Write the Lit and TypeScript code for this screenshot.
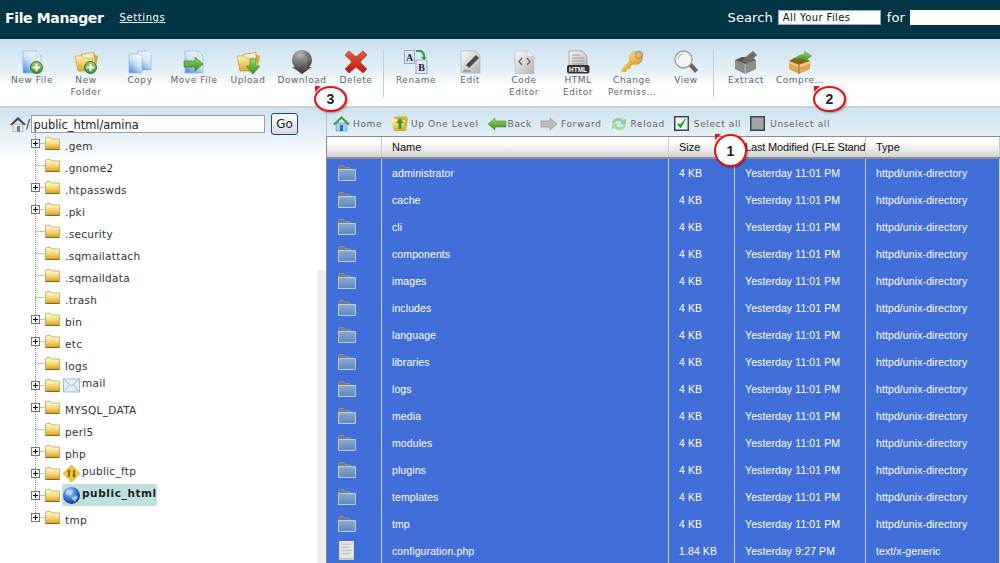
import { LitElement, html, css } from "lit";
import { customElement } from "lit/decorators.js";

const defs = html`<svg class="defs" aria-hidden="true"><defs>
  <linearGradient id="gPage" x1="0.8" y1="0" x2="0.2" y2="1"><stop offset="0" stop-color="#f4f9fe"/><stop offset="0.5" stop-color="#cfe2f6"/><stop offset="1" stop-color="#4f93dc"/></linearGradient>
  <linearGradient id="gGreen" x1="0" y1="0" x2="0" y2="1"><stop offset="0" stop-color="#9fd86a"/><stop offset="1" stop-color="#2f8f1c"/></linearGradient>
  <linearGradient id="gFolder" x1="0" y1="0" x2="0" y2="1"><stop offset="0" stop-color="#fff4b0"/><stop offset="1" stop-color="#e0a428"/></linearGradient>
  <linearGradient id="gTree" x1="0" y1="0" x2="0" y2="1"><stop offset="0" stop-color="#fff8d4"/><stop offset="0.55" stop-color="#f7d774"/><stop offset="1" stop-color="#d99a1e"/></linearGradient>
  <linearGradient id="gGray" x1="0" y1="0" x2="1" y2="1"><stop offset="0" stop-color="#fafafa"/><stop offset="1" stop-color="#b4b4b4"/></linearGradient>
  <linearGradient id="gDark" x1="0" y1="0" x2="0" y2="1"><stop offset="0" stop-color="#8c8c8c"/><stop offset="1" stop-color="#333"/></linearGradient>
  <linearGradient id="gRed" x1="0" y1="0" x2="0" y2="1"><stop offset="0" stop-color="#f0583a"/><stop offset="1" stop-color="#b81808"/></linearGradient>
  <linearGradient id="gKey" x1="0" y1="0" x2="1" y2="1"><stop offset="0" stop-color="#ffe07a"/><stop offset="1" stop-color="#d88a18"/></linearGradient>
  <linearGradient id="gBlueF" x1="0" y1="0" x2="0" y2="1"><stop offset="0" stop-color="#88a9d2"/><stop offset="1" stop-color="#5f88bd"/></linearGradient>
  <radialGradient id="gGlobe" cx="0.4" cy="0.3" r="0.8"><stop offset="0" stop-color="#cfe6ff"/><stop offset="0.5" stop-color="#2f6fd0"/><stop offset="1" stop-color="#0c2a78"/></radialGradient>
  <radialGradient id="gBall" cx="0.4" cy="0.25" r="0.8"><stop offset="0" stop-color="#b8b8b8"/><stop offset="1" stop-color="#3a3a3a"/></radialGradient>
</defs></svg>`;

const I = (body: unknown, w = 24, h = 24) =>
  html`<svg class="ic" width=${w} height=${h} viewBox="0 0 24 24">${body}</svg>`;

const plusBadge = html`<svg x="10" y="11" width="13" height="13" viewBox="0 0 13 13"><circle cx="6.5" cy="6.5" r="6" fill="url(#gGreen)" stroke="#2a7a24"/><path d="M6.5 2.8v7.4M2.8 6.5h7.4" stroke="#fff" stroke-width="2.2"/></svg>`;
const pagePath = html`<svg width="24" height="24" viewBox="0 0 24 24"><path d="M3 1h13l5 5v17H3z" fill="url(#gPage)" stroke="#8fb6dd" stroke-width=".7"/><path d="M16 1v5h5z" fill="#fff" stroke="#8fb6dd" stroke-width=".6"/></svg>`;
const folderBig = html`<svg width="24" height="24" viewBox="0 0 24 24"><path d="M7 4l13-2 1 3 3 1-3 15H5z" fill="#d9a93a"/><path d="M8 5l11-2 2 13-11 2z" fill="#fff" opacity=".85"/><path d="M1 6h7l2 2h9l-1 13H4z" fill="url(#gFolder)" stroke="#b98a22" stroke-width=".6"/></svg>`;

const icons: Record<string, unknown> = {
  newfile: I(html`<svg>${pagePath}${plusBadge}</svg>`),
  newfolder: I(html`<svg>${folderBig}${plusBadge}</svg>`),
  copy: I(html`<svg width="24" height="24" viewBox="0 0 24 24"><path d="M10 1h9l4 4v15H10z" fill="url(#gPage)" stroke="#8fb6dd" stroke-width=".7"/><path d="M19 1v4h4z" fill="#fff"/><path d="M1 4h9l4 4v15H1z" fill="url(#gPage)" stroke="#8fb6dd" stroke-width=".7"/><path d="M10 4v4h4z" fill="#fff"/></svg>`),
  move: I(html`<svg>${pagePath}<svg width="24" height="24" viewBox="0 0 24 24"><path d="M2 11h11V7l8 7-8 7v-4H2z" fill="url(#gGreen)" stroke="#2a7a24" stroke-width=".6"/></svg></svg>`),
  upload: I(html`<svg>${folderBig}<svg width="24" height="24" viewBox="0 0 24 24"><path d="M14 9h6v7h4l-7 8-7-8h4z" fill="url(#gGreen)" stroke="#2a7a24" stroke-width=".5"/></svg></svg>`),
  download: I(html`<svg width="24" height="24" viewBox="0 0 24 24"><circle cx="12" cy="10" r="10" fill="url(#gBall)"/><path d="M3 9h18" stroke="#8a8a8a" stroke-width=".7"/><path d="M7 9h10v8h5L12 24 2 17h5z" fill="url(#gDark)"/></svg>`),
  del: I(html`<svg width="24" height="24" viewBox="0 0 24 24"><path d="M1 5l4-4 7 6 7-6 4 4-7 7 7 7-4 4-7-6-7 6-4-4 7-7z" fill="url(#gRed)" stroke="#a01808" stroke-width=".5"/></svg>`),
  rename: I(html`<svg width="24" height="24" viewBox="0 0 24 24"><rect x="0.5" y="0.5" width="10" height="13" fill="#dfe8f5" stroke="#9ab"/><text x="5.5" y="11" class="svgt" text-anchor="middle">A</text><rect x="12" y="10" width="11" height="13.500" fill="#dfe8f5" stroke="#9ab"/><text x="17.500" y="21" class="svgt" text-anchor="middle">B</text><path d="M12 1c5-1 8 1 8 5v3" fill="none" stroke="#2f9a3c" stroke-width="2"/><path d="M17 7h6l-3 3z" fill="#2f9a3c"/></svg>`),
  edit: I(html`<svg width="24" height="24" viewBox="0 0 24 24"><path d="M3 1h14l5 5v17H3z" fill="url(#gGray)" stroke="#aaa" stroke-width=".6"/><path d="M6 20l2-5L18 5l3 3-10 10z" fill="#4a4a4a"/><path d="M6 20l2-5 3 3z" fill="#ddd"/><path d="M5 21h8" stroke="#777"/></svg>`),
  code: I(html`<svg width="24" height="24" viewBox="0 0 24 24"><path d="M3 1h13l6 5v18H3z" fill="url(#gGray)" stroke="#bbb" stroke-width=".6"/><path d="M16 1v5h6z" fill="#e8e8e8"/><path d="M10 8l-3 3.500 3 3.500M15 8l3 3.500-3 3.500" fill="none" stroke="#666" stroke-width="1.300"/></svg>`),
  htmle: I(html`<svg width="24" height="24" viewBox="0 0 24 24"><path d="M3 1h13l5 5v11H3z" fill="url(#gGray)" stroke="#888" stroke-width=".6"/><path d="M6 5h8M6 8h12M6 11h12M6 14h12" stroke="#999"/><rect x="1" y="15" width="22.500" height="8.500" rx="2" fill="#333"/><text x="12" y="22" class="svgh" text-anchor="middle">HTML</text></svg>`),
  key: I(html`<svg width="24" height="24" viewBox="0 0 24 24"><path d="M1 20l9-10 4 4-3 2-1 3-3 0-1 3-4 0z" fill="url(#gKey)"/><circle cx="16" cy="8" r="6.500" fill="url(#gKey)" stroke="#c88a20" stroke-width=".5"/><circle cx="19" cy="5" r="3.500" fill="none" stroke="#999" stroke-width="1.300"/></svg>`),
  view: I(html`<svg width="24" height="24" viewBox="0 0 24 24"><path d="M14 15l3-3 7 8-3 3z" fill="#666"/><circle cx="9.500" cy="9.500" r="8.500" fill="#f4f4f4" stroke="#999" stroke-width="1.300"/><path d="M4 9a6 6 0 0 1 5-5" stroke="#ccc" fill="none" stroke-width="1.500"/></svg>`),
  extract: I(html`<svg width="24" height="24" viewBox="0 0 24 24"><path d="M1 10l10 4 11-4v9l-11 5-10-5z" fill="#8c8c8c"/><path d="M1 10l7-3h8l6 3-11 4z" fill="#555"/><path d="M8 10l11-9 4 4-9 9z" fill="#6e6e6e"/><path d="M11 14v10" stroke="#bbb"/></svg>`),
  compress: I(html`<svg width="24" height="24" viewBox="0 0 24 24"><path d="M1 11l10 4 11-4v8l-11 5-10-5z" fill="#e0a850"/><path d="M1 11l7-4h7l7 4-11 4z" fill="#8a6226"/><path d="M1 11l-1 2 10 4 1-2zM22 11l2 2-11 4-2-2z" fill="#f0c888"/><path d="M11 15v9" stroke="#a87830"/><path d="M8 11c0-5 3-7 8-7V0l8 6-8 6V8c-3 0-6 1-8 3z" fill="url(#gGreen)"/></svg>`),
};

const small: Record<string, unknown> = {
  home: html`<svg class="ic" width="17" height="17" viewBox="0 0 17 17"><path d="M3 8h11v8H3z" fill="#a8cdf0" stroke="#5f8fc0" stroke-width=".6"/><path d="M0 9l8.500-8L17 9l-2 1-6.500-6L2 10z" fill="#3ea03a"/><path d="M7 10h3v6H7z" fill="#2f6fb8"/></svg>`,
  up: html`<svg class="ic" width="17" height="17" viewBox="0 0 17 17"><path d="M3 2l12-1 2 3-2 12H3z" fill="#d9b040"/><path d="M0 4h6l1 1h7l-2 11H3z" fill="url(#gFolder)"/><path d="M9 3l4 5h-2.500v6h-3V8H5z" fill="#3a9a2a"/></svg>`,
  back: html`<svg class="ic" width="18" height="14" viewBox="0 0 18 14"><path d="M0 7l7-6v3h11v6H7v3z" fill="url(#gGreen)" stroke="#3a8a1c" stroke-width=".5"/></svg>`,
  forward: html`<svg class="ic" width="16" height="14" viewBox="0 0 16 14"><path d="M16 7l-7-6v3H0v6h9v3z" fill="#bdbdbd" stroke="#8c8c8c" stroke-width=".6"/></svg>`,
  reload: html`<svg class="ic" width="16" height="16" viewBox="0 0 15 15"><path d="M1 6c1-4 7-6 11-2l2-2v6H8l2-2C8 4 4 4 3 7z" fill="#8fd08a"/><path d="M14 9c-1 4-7 6-11 2l-2 2V7h6L5 9c2 2 6 2 7-1z" fill="#a6d8a2"/></svg>`,
  check: html`<svg class="ic" width="15" height="15" viewBox="0 0 15 15"><rect x=".75" y=".75" width="13.500" height="13.500" fill="#f4f8f8" stroke="#34464e" stroke-width="1.500"/><path d="M3.500 8l3 4 5-9-5 5.500z" fill="#1fa52c" stroke="#1fa52c"/></svg>`,
  uncheck: html`<svg class="ic" width="15" height="15" viewBox="0 0 15 15"><rect x=".75" y=".75" width="13.500" height="13.500" fill="#a4a4a4" stroke="#34464e" stroke-width="1.500"/></svg>`,
};

const pathHome = html`<svg class="ic" width="16" height="16" viewBox="0 0 16 16"><path d="M3 8h10v7.500H3z" fill="#e8e8e8" stroke="#999" stroke-width=".6"/><path d="M0 8.500L8 1l8 7.500-2 .8L8 4 2 9.300z" fill="#4a4a4a"/><path d="M7 10h3v5.500H7z" fill="#777"/></svg>`;

const treeFolder = html`<svg class="ic" width="15" height="13" viewBox="0 0 15 13"><path d="M.5 12.500V2l1-1.500h4L7 2h7.500v10.500z" fill="url(#gTree)" stroke="#b8953c" stroke-width=".7"/><path d="M1 3.500h13" stroke="#fff6c8"/><path d="M.5 12.500h14" stroke="#8a6a1a"/></svg>`;

const overlay: Record<string, unknown> = {
  mail: html`<svg class="ic" width="17" height="17" viewBox="0 0 17 17"><rect x=".5" y="2" width="16" height="13" fill="#e4eef8" stroke="#9fbad6"/><path d="M.5 2l8 7 8-7M.5 15l6-7M16.500 15l-6-7" fill="none" stroke="#9fbad6"/></svg>`,
  ftp: html`<svg class="ic" width="17" height="17" viewBox="0 0 17 17"><path d="M8.500 0L17 8.500 8.500 17 0 8.500z" fill="#f0c830" stroke="#c89a20" stroke-width=".6"/><path d="M6 4l2 3H7v5H5V7H4zM11 13l2-3h-1V5h-2v5H9z" fill="#8a6a1a"/></svg>`,
  globe: html`<svg class="ic" width="17" height="17" viewBox="0 0 17 17"><circle cx="8.500" cy="8.500" r="8.500" fill="url(#gGlobe)"/><path d="M3 4c3-2 6-1 7 1l-3 3-4-1zM8 11l5-3 2 2-3 5z" fill="#bfe0ff" opacity=".75"/></svg>`,
};

const treeData: [string, boolean, string?][] = [
  [".gem", true], [".gnome2", false], [".htpasswds", true], [".pki", true],
  [".security", false], [".sqmailattach", false], [".sqmaildata", false], [".trash", false],
  ["bin", true], ["etc", true], ["logs", false], ["mail", true, "mail"],
  ["MYSQL_DATA", true], ["perl5", false], ["php", true], ["public_ftp", true, "ftp"],
  ["public_html", true, "globe"], ["tmp", true],
];

const tools: [string, string, boolean?][] = [
  ["newfile", "New File"], ["newfolder", "New Folder"], ["copy", "Copy"], ["move", "Move File"],
  ["upload", "Upload"], ["download", "Download"], ["del", "Delete", true],
  ["rename", "Rename"], ["edit", "Edit"], ["code", "Code Editor"], ["htmle", "HTML Editor"],
  ["key", "Change Permiss…"], ["view", "View", true], ["extract", "Extract"], ["compress", "Compre…"],
];

const nav: [string, string][] = [
  ["home", "Home"], ["up", "Up One Level"], ["back", "Back"], ["forward", "Forward"],
  ["reload", "Reload"], ["check", "Select all"], ["uncheck", "Unselect all"],
];

const dirs = ["administrator", "cache", "cli", "components", "images", "includes", "language", "libraries", "logs", "media", "modules", "plugins", "templates", "tmp"];

@customElement("app-root")
export class AppRoot extends LitElement {
  static styles = css`
    :host { display: block; position: relative; width: 1000px; height: 563px; overflow: hidden; background: #fff; font-family: "DejaVu Sans", sans-serif; color: #333; }
    .defs { position: absolute; width: 0; height: 0; }
    .ic { display: block; flex: none; overflow: visible; }
    .svgt { font: bold 10px "Liberation Serif", serif; fill: #123; }
    .svgh { font: bold 6.500px "Liberation Sans", sans-serif; fill: #fff; }
    .top { height: 39px; background: #003545; color: #fff; display: flex; align-items: center; padding: 0 0 4px 5px; box-sizing: border-box; }
    .title { font-size: 14px; font-weight: bold; letter-spacing: -.35px; }
    .settings { font-size: 10px; margin-left: 16px; text-decoration: underline; letter-spacing: .6px; }
    .search { margin-left: auto; display: flex; align-items: center; font-size: 13px; letter-spacing: .1px; }
    .sel { width: 103px; height: 15px; box-sizing: border-box; border: 1px solid #9ab; background: #fff; color: #111; font-size: 10px; margin: 0 6px 0 5px; padding-left: 4px; line-height: 14px; letter-spacing: .4px; }
    .q { width: 90px; height: 15px; background: #fff; margin-left: 5px; }
    .tools { height: 69px; box-sizing: border-box; padding: 11px 0 0 5px; display: flex; align-items: flex-start; border-bottom: 2px solid #ccd0d2; background: linear-gradient(#c9e0ef, #e6f1f8 50%, #fff 70%); }
    .tool { width: 54px; display: flex; flex-direction: column; align-items: center; flex: none; }
    .tool span { margin-top: 0; font-size: 9px; line-height: 12px; color: #666; text-align: center; letter-spacing: .55px; width: 52px; white-space: normal; }
    .sep { width: 1px; height: 48px; background: #c4ccd0; margin: -1px 5px 0 0; flex: none; }
    .main { display: flex; height: 455px; }
    .left { width: 326px; flex: none; position: relative; background: linear-gradient(#cde2f0, #fff 52px); overflow: hidden; }
    .path { display: flex; align-items: center; height: 27px; padding: 5px 0 0 10px; box-sizing: border-box; }
    .slash { font-size: 12px; width: 5px; color: #333; }
    .pinput { width: 234px; height: 18px; box-sizing: border-box; background: #fff; border: 1px solid #8fa2b0; font-size: 11.400px; line-height: 18px; padding-left: 1.500px; color: #222; }
    .go { width: 27px; height: 22px; margin-left: 6px; box-sizing: border-box; border: 1px solid #1c4a78; border-radius: 3px; background: linear-gradient(#fff, #d8d8ea); font-size: 12px; color: #222; text-align: center; line-height: 20px; }
    .tree { margin-top: -3px; padding-left: 25px; }
    .row { display: flex; height: 22px; }
    .conn { width: 20px; height: 22px; flex: none; }
    .fold { margin-top: 5px; flex: none; }
    .lbl { margin: 8px 0 0 5px; font-size: 10.500px; line-height: 13px; color: #333; letter-spacing: .3px; white-space: nowrap; }
    .ov { display: flex; margin-left: 3px; height: 22px; }
    .ov .ic { margin-top: 3px; }
    .ov .lbl { margin: 3px 0 0 2px; }
    .ov.cur { background: #c0e0e0; border-radius: 2px; margin-left: 2px; padding-left: 1px; }
    .ov.cur .lbl { font-weight: bold; color: #222; letter-spacing: .6px; margin-left: 2px; }
    .track { position: absolute; right: 0; bottom: 0; top: 162px; width: 9px; background: #ededed; }
    .right { flex: 1; min-width: 0; }
    .nav { height: 28px; box-sizing: border-box; padding: 3px 0 0 6px; display: flex; align-items: center; gap: 9px; background: linear-gradient(#cde2f0, #e4f0f7); border-left: 1px solid #bbc; }
    .nav div { display: flex; align-items: center; flex: none; }
    .slot { width: 16px; flex: none; }
    .nav span { margin-left: 4px; font-size: 9px; color: #666; letter-spacing: .62px; white-space: nowrap; }
    .tbl { border-left: 1px solid #8c8c8c; }
    .grid { display: grid; grid-template-columns: 55px 287px 66px 131px 1fr; }
    .grid > div { box-sizing: border-box; padding-left: 10px; overflow: hidden; white-space: nowrap; border-right: 1px solid #c8cfe0; display: flex; align-items: center; }
    .head { height: 23px; border-top: 1px solid #8c8c8c; border-bottom: 2px solid #8c8c8c; box-sizing: border-box; background: linear-gradient(#fff 25%, #d4d4d4); }
    .head > div { font: 11px "Liberation Sans", sans-serif; color: #111; border-right: 1px solid #ccc !important; }
    .head > .lm { letter-spacing: -.15px; }
    .item { height: 27px; background: #426ed9; color: #fff; }
    .item > div { font: 10.500px "Liberation Sans", sans-serif; letter-spacing: .1px; }
    .item > div:first-child { padding-left: 11px; }
    .badge { position: absolute; width: 33px; box-sizing: border-box; border: 2px solid #e81010; border-radius: 50%; background: #fff; color: #222; font: bold 14px "Liberation Sans", sans-serif; display: flex; align-items: center; justify-content: center; box-shadow: 1px 1px 2px rgba(0,0,0,.35); }
    .badge::before { content: ""; position: absolute; left: -1px; top: -2px; border-style: solid; border-width: 6px 6px 0 0; border-color: #e81010 transparent transparent transparent; }
    .b1 { left: 714px; top: 134px; height: 33px; }
    .b2 { left: 813px; top: 86px; height: 26px; }
    .b3 { left: 314px; top: 86px; height: 26px; }
  `;

  private conn(plus: boolean, last: boolean) {
    return html`<svg class="conn" viewBox="0 0 20 22" width="20" height="22">
      <path d="M10.500 0V${last ? 11 : 22}" stroke="#888" stroke-dasharray="1 1" fill="none"/>
      <path d="M10.500 11.500H20" stroke="#888" stroke-dasharray="1 1" fill="none"/>
      ${plus ? html`<svg x="6" y="7" width="9" height="9" viewBox="0 0 9 9"><rect x=".5" y=".5" width="8" height="8" fill="#fff" stroke="#777"/><path d="M2 4.500h5M4.500 2v5" stroke="#000"/></svg>` : null}
    </svg>`;
  }

  render() {
    return html`
      ${defs}
      <div class="top">
        <div class="title">File Manager</div>
        <div class="settings">Settings</div>
        <div class="search">Search<div class="sel">All Your Files</div>for<div class="q"></div></div>
      </div>
      <div class="tools">
        ${tools.map(([ic, label, sep]) => html`
          <div class="tool">${icons[ic]}<span>${label}</span></div>
          ${sep ? html`<div class="sep"></div>` : null}
        `)}
      </div>
      <div class="main">
        <div class="left">
          <div class="path">${pathHome}<span class="slash">/</span><div class="pinput">public_html/amina</div><div class="go">Go</div></div>
          <div class="tree">
            ${treeData.map(([name, plus, ov], i) => html`
              <div class="row">
                ${this.conn(plus, i === treeData.length - 1)}
                <div class="fold">${treeFolder}</div>
                ${ov
                  ? html`<div class="ov ${ov === "globe" ? "cur" : ""}">${overlay[ov]}<div class="lbl">${name}</div></div>`
                  : html`<div class="lbl">${name}</div>`}
              </div>`)}
          </div>
          <div class="track"></div>
        </div>
        <div class="right">
          <div class="nav">
            ${nav.map(([ic, label]) => html`<div><div class="slot">${small[ic]}</div><span>${label}</span></div>`)}
          </div>
          <div class="tbl">
            <div class="grid head"><div></div><div>Name</div><div>Size</div><div class="lm">Last Modified (FLE Stand</div><div>Type</div></div>
            ${dirs.map((d) => html`<div class="grid item"><div>${this.dirIcon()}</div><div>${d}</div><div>4 KB</div><div>Yesterday 11:01 PM</div><div>httpd/unix-directory</div></div>`)}
            <div class="grid item"><div>${this.fileIcon()}</div><div>configuration.php</div><div>1.84 KB</div><div>Yesterday 9:27 PM</div><div>text/x-generic</div></div>
          </div>
        </div>
      </div>
      <div class="badge b1">1</div>
      <div class="badge b2">2</div>
      <div class="badge b3">3</div>
    `;
  }

  private dirIcon() {
    return html`<svg class="ic" width="18" height="16" viewBox="0 0 18 16"><path d="M.5 15.500V1.500l1-1h4l1.500 2h5l1 2h4v11z" fill="#7c7c7c" stroke="#9aa0a8" stroke-width=".6"/><path d="M.5 15.500V4.500h17v11z" fill="url(#gBlueF)" stroke="#dfe6f0" stroke-width=".7"/></svg>`;
  }
  private fileIcon() {
    return html`<svg class="ic" width="17" height="19" viewBox="0 0 16 18"><path d="M1 0h14v18H1z" fill="#e8e8e2"/><path d="M3 3h10M3 6h8M3 9h10M3 12h8" stroke="#c8c8c8" stroke-width="1.500"/><path d="M1 17h14" stroke="#aaa"/></svg>`;
  }
}
